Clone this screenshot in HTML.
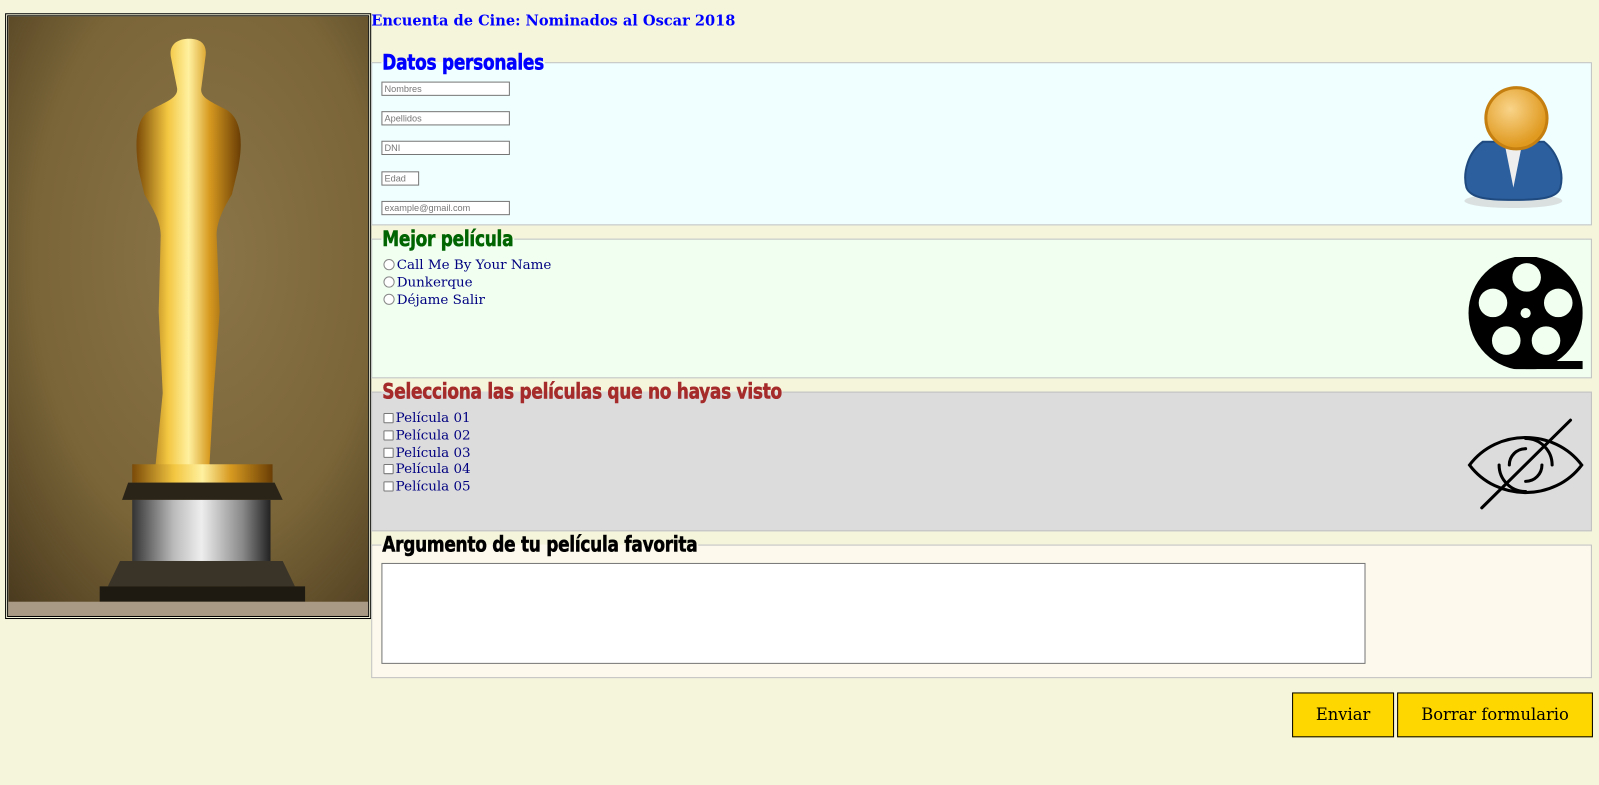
<!DOCTYPE html>
<html><head><meta charset="utf-8"><style>
body{margin:0;background:#f5f5dc;width:1599px;height:785px;position:relative;overflow:hidden;font-family:"Liberation Serif",serif}
#w{position:absolute;left:0;top:0;width:1568px;height:770px;transform:scale(1.0198);transform-origin:0 0}
.a{position:absolute}
.fs{position:absolute;left:364px;width:1195px;border:1px solid #c0c0c0}
.lg{position:absolute;font-family:"DejaVu Sans Condensed","Liberation Sans Narrow","Liberation Sans",sans-serif;font-weight:bold;font-size:21px;line-height:22px;padding:0 1px;letter-spacing:-0.3px;transform:scaleX(0.88);transform-origin:left;-webkit-text-stroke:0.5px currentColor}
.in{position:absolute;width:122px;height:12px;border:1px solid #767676;background:#fff;font:9px "Liberation Sans",sans-serif;color:#777;line-height:12px;padding-left:2px}
.opt{position:absolute;left:376px;color:#000080;line-height:17px;font-family:"DejaVu Serif","Liberation Serif",serif;font-size:13.2px}
.r{display:inline-block;width:9px;height:9px;border:1px solid #888;border-radius:50%;margin-right:2px;vertical-align:-1px;background:#fff}
.c{display:inline-block;width:8px;height:8px;border:1px solid #777;border-radius:1px;margin-right:2px;vertical-align:-1px;background:#fff}
.btn{position:absolute;top:679px;height:42px;border:1px solid #000;background:#ffd700;line-height:42px;text-align:center;color:#000;font-family:"DejaVu Serif","Liberation Serif",serif;font-size:16px}
</style></head><body><div id="w">
<div class="a" style="left:5px;top:13px;width:353px;height:588px;border:3px double #000;overflow:hidden">
<svg width="353" height="588" viewBox="0 0 354 589" preserveAspectRatio="none" style="display:block">
<defs>
<radialGradient id="bg" cx="0.55" cy="0.4" r="0.8"><stop offset="0" stop-color="#8a7548"/><stop offset="0.6" stop-color="#7a6538"/><stop offset="1" stop-color="#4a3a1e"/></radialGradient>
<linearGradient id="g" x1="0" x2="1"><stop offset="0" stop-color="#7a4a08"/><stop offset="0.3" stop-color="#f3c640"/><stop offset="0.5" stop-color="#fff1a0"/><stop offset="0.7" stop-color="#d79a20"/><stop offset="1" stop-color="#6a3e05"/></linearGradient>
<linearGradient id="s" x1="0" x2="1"><stop offset="0" stop-color="#333"/><stop offset="0.3" stop-color="#bbb"/><stop offset="0.5" stop-color="#eee"/><stop offset="0.8" stop-color="#888"/><stop offset="1" stop-color="#222"/></linearGradient>
</defs>
<rect width="354" height="589" fill="url(#bg)"/>
<path d="M178 22 C190 22 196 28 194 40 L190 70 C188 80 200 84 215 92 C228 100 232 120 226 150 L220 175 C214 185 205 200 205 215 L208 290 L202 370 L198 440 L210 445 L215 450 L140 450 L145 440 L152 370 L148 290 L150 215 C150 200 140 185 134 175 L128 150 C124 120 126 100 140 92 C155 84 168 80 166 70 L160 40 C158 28 166 22 178 22Z" fill="url(#g)"/>
<rect x="122" y="440" width="138" height="18" fill="url(#g)"/>
<path d="M118 458 L262 458 L270 475 L112 475Z" fill="#2a2418"/>
<rect x="122" y="475" width="136" height="60" fill="url(#s)"/>
<path d="M110 535 L270 535 L282 560 L98 560Z" fill="#3a3428"/>
<path d="M90 560 L292 560 L292 575 L90 575Z" fill="#1e1a12"/>
<rect x="0" y="575" width="354" height="14" fill="#a89a84"/>
</svg></div>
<div class="a" style="left:364px;top:13px;font-weight:bold;color:#0000ff;font-family:'DejaVu Serif','Liberation Serif',serif;font-size:14.3px">Encuenta de Cine: Nominados al Oscar 2018</div>

<div class="fs" style="top:61px;height:158px;background:#f0ffff"></div>
<div class="lg" style="left:374px;top:50px;color:#0000ff;background:linear-gradient(#f5f5dc 50%,#f0ffff 50%)">Datos personales</div>
<div class="in" style="left:374px;top:80px">Nombres</div>
<div class="in" style="left:374px;top:109px">Apellidos</div>
<div class="in" style="left:374px;top:138px">DNI</div>
<div class="in" style="left:374px;top:168px;width:33px">Edad</div>
<div class="in" style="left:374px;top:197px">example@gmail.com</div>
<svg class="a" style="left:1432px;top:84px" width="102" height="122" viewBox="0 0 102 122">
<defs><radialGradient id="h" cx="0.4" cy="0.35" r="0.6"><stop offset="0" stop-color="#f9d48a"/><stop offset="1" stop-color="#e09a20"/></radialGradient></defs>
<ellipse cx="52" cy="113" rx="48" ry="7" fill="#ccc" opacity="0.6"/>
<path d="M22 55 C8 65 2 85 6 100 C10 110 25 112 52 112 C80 112 95 110 98 100 C102 85 95 65 82 55Z" fill="#2c5f9e" stroke="#1f4a80" stroke-width="2"/>
<path d="M44 60 L52 100 L60 60Z" fill="#eee"/>
<circle cx="55" cy="32" r="30" fill="url(#h)" stroke="#c47f10" stroke-width="3"/>
</svg>

<div class="fs" style="top:234px;height:135px;background:#f0fff0"></div>
<div class="lg" style="left:374px;top:223px;color:#006400;background:linear-gradient(#f5f5dc 50%,#f0fff0 50%)">Mejor película</div>
<div class="opt" style="top:252px"><span class="r"></span>Call Me By Your Name</div>
<div class="opt" style="top:269px"><span class="r"></span>Dunkerque</div>
<div class="opt" style="top:286px"><span class="r"></span>Déjame Salir</div>
<svg class="a" style="left:1440px;top:252px" width="112" height="110" viewBox="0 0 112 110">
<circle cx="56" cy="55" r="56" fill="#000"/>
<rect x="56" y="102" width="56" height="8" fill="#000"/>
<g fill="#f0fff0"><circle cx="57" cy="20" r="14"/><circle cx="24" cy="45" r="14"/><circle cx="88" cy="45" r="14"/><circle cx="37" cy="82" r="14"/><circle cx="76" cy="82" r="14"/><circle cx="56" cy="55" r="5"/></g>
</svg>

<div class="fs" style="top:384px;height:135px;background:#dcdcdc"></div>
<div class="lg" style="left:374px;top:373px;color:#a52a2a;background:linear-gradient(#f5f5dc 50%,#dcdcdc 50%)">Selecciona las películas que no hayas visto</div>
<div class="opt" style="top:402px"><span class="c"></span>Película 01</div>
<div class="opt" style="top:419px"><span class="c"></span>Película 02</div>
<div class="opt" style="top:436px"><span class="c"></span>Película 03</div>
<div class="opt" style="top:452px"><span class="c"></span>Película 04</div>
<div class="opt" style="top:469px"><span class="c"></span>Película 05</div>
<svg class="a" style="left:1438px;top:410px" width="116" height="92" viewBox="0 0 116 92" fill="none" stroke="#000" stroke-width="3" stroke-linecap="round">
<path d="M3 46 C30 10 86 10 113 46 C86 82 30 82 3 46Z"/>
<path d="M58 20 A26 26 0 0 1 84 46 M58 72 A26 26 0 0 1 32 46"/>
<path d="M42 46 A16 16 0 0 1 58 30 M74 46 A16 16 0 0 1 58 62"/>
<path d="M15 88 L102 2"/>
</svg>

<div class="fs" style="top:534px;height:129px;background:#fdf9ec"></div>
<div class="lg" style="left:374px;top:523px;color:#000;background:linear-gradient(#f5f5dc 50%,#fdf9ec 50%)">Argumento de tu película favorita</div>
<div class="a" style="left:374px;top:552px;width:963px;height:97px;border:1px solid #767676;background:#fff"></div>

<div class="btn" style="left:1267px;width:98px">Enviar</div>
<div class="btn" style="left:1370px;width:190px">Borrar formulario</div>
</div></body></html>
